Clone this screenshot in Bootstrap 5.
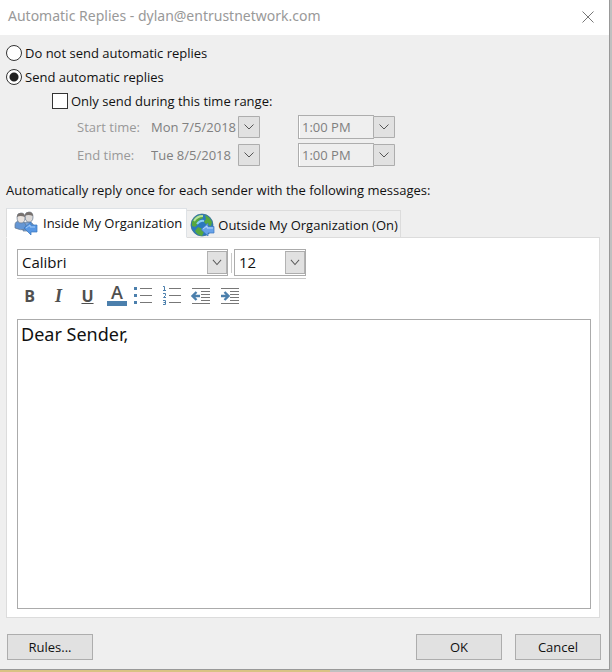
<!DOCTYPE html>
<html lang="en">
<head>
<meta charset="utf-8">
<meta name="viewport" content="width=device-width, initial-scale=1">
<title>Automatic Replies</title>
<link rel="stylesheet" href="https://cdn.jsdelivr.net/npm/bootstrap@5.3.0/dist/css/bootstrap.min.css">
<style>
body { font-family: "Open Sans", "Noto Sans", sans-serif; font-size: 13px; line-height: 20px; color: #111; background: #c4c4c4; }
.desk { padding: 0 2px 2px 0; background: linear-gradient(#d9c283, #d9c283) left bottom / 54% 2px no-repeat, #c0c0c0; }
.dialog { background: #efefef; border-right: 1px solid #999; border-bottom: 1px solid #999; }
.titlebar { height: 35px; background: #fff; color: #999; padding: 0 14px 2px 8px; }
.titlebar h1 { font-family: "Noto Sans", sans-serif; font-size: 14px; font-weight: 400; }
.close-btn { width: 14px; height: 14px; }
.close-btn svg, .tool svg { display: block; }
.options { padding: 6px 6px 0; }
.choice { height: 24px; gap: 3px; }
.choice input { appearance: none; width: 16px; height: 16px; margin: 0; border: 1px solid #333; background: #fff; }
.choice input[type=radio] { border-radius: 50%; }
.choice input[type=radio]:checked { background: radial-gradient(circle, #222 4px, #fff 5px); }
.nested { padding-left: 46px; }
.time-row { height: 28px; padding-left: 71px; color: #999; }
.time-row label { width: 74px; }
select { appearance: none; border-radius: 0; outline: 0; color: inherit; }
select:disabled { opacity: 1; color: #808080; }
.arrow { background: url("data:image/svg+xml,%3Csvg xmlns='http://www.w3.org/2000/svg' width='22' height='22'%3E%3Cpath d='M.5.5h21v21H.5z' fill='%23e1e1e1' stroke='%23adadad'/%3E%3Cpath d='M6.500 8.500l4.500 4.500 4.500-4.500' fill='none' stroke='%23555'/%3E%3C/svg%3E") right center no-repeat; }
.date { width: 109px; height: 22px; border: 0; padding: 0; margin-right: 38px; }
.clock-box { width: 97px; height: 24px; background: linear-gradient(#adadad, #adadad) left / 76px 100% no-repeat; padding: 1px 0 1px 1px; }
.clock { width: 96px; height: 22px; padding: 0 3px; border: 0; background-color: #efefef; box-shadow: inset 1px 0 #fff; }
.intro { margin: 9px 0 0; height: 24px; padding: 2px 0; }
.tabs-area { padding: 6px 9px 0 6px; }
.tab-row { border: 0; height: 30px; position: relative; margin-bottom: -1px; }
.tab-row .nav-link { border: 1px solid #dcdcdc; border-radius: 0; color: #111; background: #efefef; margin: 0; height: 28px; padding: 2px 2px 0 3px; gap: 3px; border-left: 0; }
.tab-row .nav-link.active { background: #fff; height: 30px; border-left: 1px solid #dcdcdc; border-bottom-color: #fff; padding: 0 4px 0 7px; gap: 5px; color: #111; }
.panel { background: #fff; border: 1px solid #dcdcdc; padding: 11px 8px 8px 10px; }
.fonts { border-bottom: 1px solid #c8c8c8; padding-bottom: 2px; }
.fonts select { height: 27px; border: 1px solid #ababab; padding: 0 4px 2px; font-size: 15px; background-color: #fff; background-size: 20px 23px; }
.family { width: 211px; }
.size { width: 72px; }
.rule { width: 1px; height: 20px; background: #c8c8c8; margin: 0 2px 0 3px; }
.tools { padding: 6px 0 12px; margin-left: -2px; }
.tool { border: 0; background: none; padding: 0; width: 29px; height: 22px; font-size: 16px; line-height: 22px; font-weight: 700; color: #505050; }
.tool .serif { font-family: "Liberation Serif", serif; font-size: 18px; }
.letter { height: 16px; line-height: 14px; width: 20px; margin: 0 4px 1px 5px; border-bottom: 5px solid #4b7fac; box-sizing: content-box; font-size: 18px; font-weight: 600; }
.message { resize: none; border: 1px solid #ababab; border-radius: 0; padding: 1px 3px; font-family: "Noto Sans", sans-serif; font-size: 18px; line-height: 26px; color: #111; outline: 0; min-height: 100px; }
.actions { padding: 16px 8px 9px 7px; gap: 13px; }
.push { width: 86px; height: 26px; padding: 0; border: 1px solid #adadad; border-radius: 0; background: #e1e1e1; font-size: 13px; line-height: 20px; color: #111; }
</style>
<script src="https://cdn.jsdelivr.net/npm/bootstrap@5.3.0/dist/js/bootstrap.bundle.min.js"></script>
</head>
<body>
<div class="desk vh-100 d-flex">
<main class="dialog flex-grow-1 d-flex flex-column">
  <header class="titlebar d-flex align-items-center justify-content-between">
    <h1 class="m-0">Automatic Replies - dylan@entrustnetwork.com</h1>
    <button type="button" class="close-btn border-0 bg-transparent p-0" aria-label="Close"><svg width="14" height="14" fill="none" stroke="#777"><path d="M1.500 1.500l11 11M12.500 1.500l-11 11"/></svg></button>
  </header>
  <section class="options">
    <div class="choice d-flex align-items-center"><input type="radio" name="send" id="off"><label for="off">Do not send automatic replies</label></div>
    <div class="choice d-flex align-items-center"><input type="radio" name="send" id="on" checked><label for="on">Send automatic replies</label></div>
    <div class="choice nested d-flex align-items-center"><input type="checkbox" id="range"><label for="range">Only send during this time range:</label></div>
    <div class="time-row d-flex align-items-center"><label for="sd">Start time:</label><select id="sd" class="arrow date" disabled><option>Mon 7/5/2018</option></select><div class="clock-box d-flex"><select class="arrow clock" aria-label="Start hour" disabled><option>1:00 PM</option></select></div></div>
    <div class="time-row d-flex align-items-center"><label for="ed">End time:</label><select id="ed" class="arrow date" disabled><option>Tue 8/5/2018</option></select><div class="clock-box d-flex"><select class="arrow clock" aria-label="End hour" disabled><option>1:00 PM</option></select></div></div>
    <p class="intro">Automatically reply once for each sender with the following messages:</p>
  </section>
  <section class="tabs-area flex-grow-1 d-flex flex-column">
    <div class="tab-row nav nav-tabs align-items-end flex-nowrap" role="tablist">
      <button type="button" class="nav-link active d-flex align-items-center" role="tab" aria-selected="true">
        <svg width="24" height="24" viewBox="0 0 24 24"><g stroke="#63758d" stroke-width=".7"><path d="M9 20v-5q0-4 5-4t6 4v5z" fill="#7aa4d8"/><path d="M1 17v-3q0-4 5-4t6 4v4q-5 2-11-1z" fill="#6496d4"/><path d="M11 5q0-4 4-4t4 5-4 5-4-6z" fill="#dcd9d8"/><path d="M3 6q0-4 4-4t4 5-4 5-4-6z" fill="#e8e2de"/></g><path d="M11 5q0-4 4-4t4 4q-5-2-8 0zM3 6q0-4 4-4t4 4q-5-2-8 0z" fill="#77716e"/><path d="M10 17l7-6v3h6v7h-6v3z" fill="#5797e4" stroke="#3975bb" stroke-width=".7"/><path d="M12 17l4-3v2h5" fill="none" stroke="#a5cbf6"/></svg>
        <span>Inside My Organization</span></button>
      <button type="button" class="nav-link d-flex align-items-center" role="tab" aria-selected="false">
        <svg width="25" height="24" viewBox="0 0 25 24"><circle cx="12" cy="12" r="11" fill="#2a78bd" stroke="#356d87" stroke-width=".7"/><path d="M2 9Q5 2 12 2l1 3-4 2-1 4-3 3-3-1zM15 2q5 2 7 7l-1 4-4-1-3-3 2-3zM8 14l5 2 1 3-2 4q-5-1-7-5z" fill="#57a83e"/><path d="M4 8q3-5 9-5" fill="none" stroke="#b5e29a" stroke-width="2"/><path d="M7 11q3-4 7-3" fill="none" stroke="#8bd0f4" stroke-width="2"/><path d="M11 16.500L18 10v3.500h6V20h-6v3z" fill="#67a2e9" stroke="#3975c0" stroke-width=".7"/><path d="M13 16l4-3v2h6" fill="none" stroke="#b8d6fb"/></svg>
        <span>Outside My Organization (On)</span></button>
    </div>
    <div class="panel flex-grow-1 d-flex flex-column">
      <div class="fonts d-flex align-items-center align-self-start"><select class="arrow family" aria-label="Font"><option>Calibri</option></select><span class="rule"></span><select class="arrow size" aria-label="Font size"><option>12</option></select></div>
      <div class="tools d-flex">
        <button type="button" class="tool" aria-label="Bold">B</button>
        <button type="button" class="tool" aria-label="Italic"><em class="serif">I</em></button>
        <button type="button" class="tool" aria-label="Underline"><u>U</u></button>
        <button type="button" class="tool" aria-label="Font color"><span class="letter d-block">A</span></button>
        <button type="button" class="tool" aria-label="Bullets"><svg width="29" height="22"><path d="M9 3.500h12M9 10.500h12M9 17.500h12" stroke="#777"/><path d="M3 2h3v3H3zM3 9h3v3H3zM3 16h3v3H3z" fill="#4b7fac"/></svg></button>
        <button type="button" class="tool" aria-label="Numbering"><svg width="29" height="22"><path d="M9 3.500h12M9 10.500h12M9 17.500h12" stroke="#777"/><path d="M3 1.500h1.500V5M3 5.500h3M3 8.500h2.500v2L3.500 12.500H6M3 15.500h2.500v4H3M3.500 17.500h2" fill="none" stroke="#4b7fac"/></svg></button>
        <button type="button" class="tool" aria-label="Decrease indent"><svg width="29" height="22"><path d="M3 3.500h18M12 6.500h9M12 9.500h9M12 12.500h9M12 15.500h9M3 18.500h18" stroke="#777"/><path d="M11 11H4.500M7.500 7L3.500 11l4 4" fill="none" stroke="#4b7fac" stroke-width="2.400"/></svg></button>
        <button type="button" class="tool" aria-label="Increase indent"><svg width="29" height="22"><path d="M3 3.500h18M12 6.500h9M12 9.500h9M12 12.500h9M12 15.500h9M3 18.500h18" stroke="#777"/><path d="M3 11h6.500M6.500 7l4 4-4 4" fill="none" stroke="#4b7fac" stroke-width="2.400"/></svg></button>
      </div>
      <textarea class="message flex-grow-1 w-100" aria-label="Message">Dear Sender,</textarea>
    </div>
  </section>
  <footer class="actions d-flex">
    <button type="button" class="btn push me-auto">Rules...</button>
    <button type="button" class="btn push">OK</button>
    <button type="button" class="btn push">Cancel</button>
  </footer>
</main>
</div>
</body>
</html>
